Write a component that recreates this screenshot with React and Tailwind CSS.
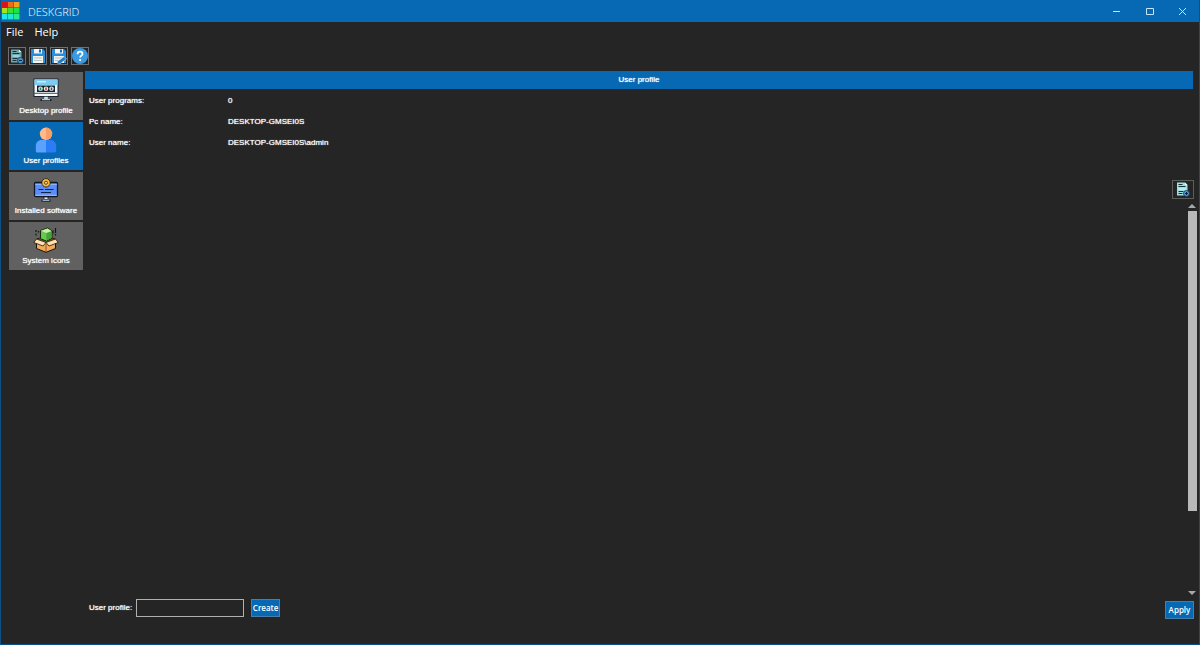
import { useState } from 'react';
import clsx from 'clsx';

const SANS = "font-['Liberation_Sans',sans-serif]";
const UI = "font-['Open_Sans','Noto_Sans',sans-serif]";
const SMALL = 'text-[8px] font-normal [text-shadow:0_0_1px_currentColor]';

const LOGO_CELLS = [
  '#d81418', '#f06a1c', '#f2a01c',
  '#a8e020', '#3fe02c', '#20e048',
  '#22e4ee', '#20e8d0', '#24ea98',
];

function Logo() {
  return (
    <svg viewBox="0 0 18 18" className="size-[18px]" aria-hidden="true">
      {LOGO_CELLS.map((fill, i) => (
        <rect key={i} x={(i % 3) * 6} y={Math.floor(i / 3) * 6} width="5.4" height="5.4" fill={fill} />
      ))}
    </svg>
  );
}

function DocumentIcon({ minus = false }) {
  return (
    <svg viewBox="0 0 14 15" className="h-[15px] w-[14px]" aria-hidden="true">
      <path d="M1 .5h8l2.500 2.500v10.500H1z" fill={minus ? '#6fa9b0' : '#9fe0e4'} />
      <path d="M9 .5V3h2.500z" fill="#e2fbfb" />
      <path d="M2.500 2.500h4M2.500 4.500h7M2.500 9.500h5M2.500 11.500h4" stroke="#14343c" strokeWidth="1" />
      <path d="M2.500 7h7" stroke="#d8f4f4" strokeWidth="1" />
      <circle cx="10.500" cy="11.500" r="3" fill="#4d97cf" stroke="#15334f" strokeWidth=".8" />
      <path d={minus ? 'M9 11.500h3' : 'M9 11.500h3M10.500 10v3'} stroke="#0d2440" strokeWidth="1" />
    </svg>
  );
}

function SaveIcon({ edit = false }) {
  return (
    <svg viewBox="0 0 16 16" className="size-[16px]" aria-hidden="true">
      <path d="M1 1h12l2 2v12H1z" fill="#2b8ed8" />
      <path d="M4 1h8v4.500H4z" fill="#eef4f8" />
      <path d="M9 1.500h2v3H9z" fill="#1f6fb0" />
      <path d="M3 8h10v7H3z" fill="#f4f4ee" />
      <path d="M4 10h8M4 12.500h8" stroke="#b9c2c6" strokeWidth="1" />
      {edit && <path d="M6.500 13.500L13 8.500l2.500 2.500L9.500 15.500l-3.500-.5z" fill="#1d7cc8" stroke="#dcecf8" strokeWidth=".6" />}
    </svg>
  );
}

function HelpIcon() {
  return (
    <svg viewBox="0 0 16 16" className="size-[16px]" aria-hidden="true">
      <circle cx="8" cy="8" r="8" fill="#3a9be2" />
      <path d="M5.500 6.200C5.500 4.600 6.600 3.700 8 3.700s2.500.9 2.500 2.200c0 1.700-2.400 1.900-2.400 3.700" fill="none" stroke="#fff" strokeWidth="1.700" />
      <circle cx="8.100" cy="12" r="1.100" fill="#fff" />
    </svg>
  );
}

function DesktopIcon() {
  return (
    <svg viewBox="0 0 26 24" className="h-6 w-[26px]" aria-hidden="true">
      <rect x="1" y="1" width="24" height="17.500" fill="#f4f8fa" stroke="#17232e" />
      <rect x="1.500" y="1.500" width="23" height="5.500" fill="#7ecbf0" />
      <path d="M4 3.800h9" stroke="#d9f3ff" strokeWidth="1.200" />
      <rect x="4" y="7.500" width="18" height="6.500" fill="#14222b" />
      <g fill="#e9f0f0">
        <circle cx="7.500" cy="10.700" r="2.300" />
        <circle cx="13" cy="10.700" r="2.300" />
        <circle cx="18.500" cy="10.700" r="2.300" />
      </g>
      <path d="M6.700 9.500h1.600v2.800H6.700z" fill="#2d7d78" />
      <path d="M12.200 9.500h1.600v2.800h-1.600z" fill="#c2452d" />
      <path d="M17.700 9.500h1.600v2.800h-1.600z" fill="#48555c" />
      <path d="M1.500 15.300h23" stroke="#17232e" strokeWidth=".8" />
      <path d="M11 18.500h4l.6 2.800H10.400z" fill="#d7e6ec" stroke="#17232e" strokeWidth=".6" />
      <path d="M7.500 22h11" stroke="#17232e" strokeWidth="2" />
      <path d="M9 21.700h8" stroke="#e6f1f5" strokeWidth="1" />
    </svg>
  );
}

function UserIcon() {
  return (
    <svg viewBox="0 0 22 26" className="h-[26px] w-[22px]" aria-hidden="true">
      <path d="M.8 24.500V19c0-3.600 2.400-6 5.700-6H11v12.500H1.800z" fill="#5aa2ff" />
      <path d="M21.200 24.500V19c0-3.600-2.400-6-5.700-6H11v12.500h9.200z" fill="#2b7df5" />
      <circle cx="11" cy="6.800" r="6.200" fill="#ffb98a" />
      <path d="M11 .6a6.200 6.200 0 0 1 0 12.400z" fill="#f79f68" />
    </svg>
  );
}

function SoftwareIcon() {
  return (
    <svg viewBox="0 0 26 24" className="h-6 w-[26px]" aria-hidden="true">
      <rect x="1.500" y="4.500" width="23" height="14" rx="1" fill="#5b8df6" stroke="#101728" strokeWidth="1.300" />
      <path d="M2.200 6.500h21.600" stroke="#8db3ff" strokeWidth="1" />
      <path d="M5.500 11.500h5M12 11.500h8.500M8 14.500h10" stroke="#12204a" strokeWidth="1.200" />
      <path d="M2.200 17.300h21.600" stroke="#a9c6f6" strokeWidth="1" />
      <path d="M11 19h4v2.500h-4z" fill="#dfe9f2" stroke="#101728" strokeWidth=".8" />
      <path d="M8.500 22.500h9" stroke="#101728" strokeWidth="2.200" />
      <path d="M9.500 22.200h7" stroke="#d8ecf8" strokeWidth="1" />
      <circle cx="13" cy="4.800" r="4.200" fill="#f6b73c" stroke="#1a1608" strokeWidth=".8" />
      <circle cx="13" cy="4.800" r="1.500" fill="#fbe08c" stroke="#3a2906" strokeWidth=".8" />
    </svg>
  );
}

function BoxIcon() {
  return (
    <svg viewBox="0 0 26 26" className="size-[26px]" aria-hidden="true">
      <path d="M3 3v2M3 6.500v2M5.500 4v1.500M22.500 1v5M22.500 7v1.500M20 3.500v3" stroke="#14170f" strokeWidth="1.200" />
      <path d="M3.500 12L13 9.500l9.500 2.500v9.500L13 25.300l-9.500-3.800z" fill="#f2aa5c" stroke="#20150c" strokeWidth="1" />
      <path d="M4 12.500l9 2.500 9-2.500-9-3z" fill="#7c4a21" />
      <path d="M7.500 3.500L14.500 1 19 3.800v7.400l-5.500 3-6-2.500z" fill="#66c850" stroke="#14260e" strokeWidth="1" />
      <path d="M8 3.700l6.400-2.200 4.200 2.500-5.200 2z" fill="#c9efa0" />
      <path d="M13.400 6.200l5.200-2v6.800l-5.200 2.600z" fill="#45a33a" />
      <path d="M3.500 12L13 15.500l-3 3.500L.8 15.500zM22.500 12L13 15.500l3 3.500 9.200-3.500z" fill="#ffe2ae" stroke="#20150c" strokeWidth=".8" />
      <path d="M13 16v9" stroke="#8e541f" strokeWidth="1" />
    </svg>
  );
}

const TOOLS = [
  { label: 'Remove profile', icon: <DocumentIcon minus /> },
  { label: 'Save', icon: <SaveIcon /> },
  { label: 'Save as', icon: <SaveIcon edit /> },
  { label: 'Help topics', icon: <HelpIcon /> },
];

const SECTIONS = [
  { label: 'Desktop profile', Icon: DesktopIcon },
  { label: 'User profiles', Icon: UserIcon },
  { label: 'Installed software', Icon: SoftwareIcon },
  { label: 'System icons', Icon: BoxIcon },
];

const DETAILS = [
  ['User programs:', '0'],
  ['Pc name:', 'DESKTOP-GMSEI0S'],
  ['User name:', 'DESKTOP-GMSEI0S\\admin'],
];

function TitleBar() {
  return (
    <header className={`flex h-[22px] items-center bg-[#0768b3] pl-px ${UI}`}>
      <Logo />
      <h1 className="ml-2 pt-px text-[11px] leading-4 font-light text-white">DESKGRID</h1>
      <div className="ml-auto flex text-[#c4e6fa]">
        <button type="button" aria-label="Minimize" className="flex h-5 w-[33px] items-center justify-center">
          <svg viewBox="0 0 9 9" className="size-[9px]"><path d="M1 4.500h7" stroke="currentColor" /></svg>
        </button>
        <button type="button" aria-label="Maximize" className="flex h-5 w-[33px] items-center justify-center">
          <svg viewBox="0 0 9 9" className="size-[9px]"><path d="M1.500 1.500h7v6h-7z" fill="none" stroke="currentColor" /></svg>
        </button>
        <button type="button" aria-label="Close" className="flex h-5 w-[33px] items-center justify-center">
          <svg viewBox="0 0 9 9" className="size-[9px]"><path d="M1 1l7 7M8 1L1 8" stroke="currentColor" /></svg>
        </button>
      </div>
    </header>
  );
}

function Sidebar({ active, onSelect }) {
  return (
    <nav className="flex w-[74px] shrink-0 flex-col gap-[2px] pt-px">
      {SECTIONS.map(({ label, Icon }) => (
        <button
          key={label}
          type="button"
          onClick={() => onSelect(label)}
          className={clsx(
            'flex h-12 flex-col items-center justify-between pt-1 pb-1 leading-[10px] whitespace-nowrap text-white',
            SMALL,
            active === label ? 'bg-[#0768b3]' : 'bg-[#616161]',
          )}
        >
          <span className="flex h-7 items-center"><Icon /></span>
          {label}
        </button>
      ))}
    </nav>
  );
}

function ScrollTrack() {
  return (
    <div className="mr-[2px] flex w-[10px] flex-1 flex-col items-center self-end">
      <button type="button" aria-label="Scroll up" className="h-2">
        <svg viewBox="0 0 10 8" className="h-2 w-[10px]"><path d="M1 5l4-4 4 4z" fill="#a8a8a8" /></svg>
      </button>
      <div className="w-[9px] grow-[300] bg-[#b9b9b9]" />
      <div className="grow-[78]" />
      <button type="button" aria-label="Scroll down" className="h-2">
        <svg viewBox="0 0 10 8" className="h-2 w-[10px]"><path d="M1 2l4 4 4-4z" fill="#a8a8a8" /></svg>
      </button>
    </div>
  );
}

export default function App() {
  const [active, setActive] = useState('User profiles');
  const [name, setName] = useState('');

  return (
    <div className={`flex min-h-screen flex-col border-x border-b border-[#0b528a] bg-[#252525] text-white ${SANS}`}>
      <TitleBar />

      {/* Menu */}
      <div className={`flex h-5 items-center gap-[11px] pl-[5px] text-[11px] leading-4 font-normal ${UI}`}>
        <button type="button">File</button>
        <button type="button">Help</button>
      </div>

      {/* Toolbar */}
      <div className="flex gap-[3px] pt-[5px] pl-[7px]">
        {TOOLS.map(({ label, icon }) => (
          <button
            key={label}
            type="button"
            aria-label={label}
            className="flex size-[18px] items-center justify-center border border-[#707070]"
          >
            {icon}
          </button>
        ))}
      </div>

      <div className="mt-[6px] flex flex-1 gap-[2px] pl-2">
        <Sidebar active={active} onSelect={setActive} />

        <main className="flex min-w-0 flex-1 flex-col">
          <h2 className={`mr-[6px] bg-[#0768b3] text-center leading-[18px] ${SMALL}`}>User profile</h2>

          <dl className={`pt-px pl-1 leading-[21px] ${SMALL}`}>
            {DETAILS.map(([term, value]) => (
              <div key={term} className="flex">
                <dt className="w-[139px]">{term}</dt>
                <dd>{value}</dd>
              </div>
            ))}
          </dl>

          <button
            type="button"
            aria-label="Add profile"
            className="mt-[27px] mr-[5px] mb-1 flex h-[19px] w-[22px] items-center justify-center self-end border border-[#5c5c58]"
          >
            <DocumentIcon />
          </button>

          <ScrollTrack />

          {/* Create / apply */}
          <form
            className="mt-[2px] mr-[5px] mb-[25px] flex items-start pl-1"
            onSubmit={(e) => e.preventDefault()}
          >
            <label htmlFor="profile-name" className={`leading-[18px] ${SMALL}`}>User profile:</label>
            <input
              id="profile-name"
              value={name}
              onChange={(e) => setName(e.target.value)}
              className="ml-1 h-[18px] w-[108px] border border-[#b0b0b0] bg-transparent px-1 text-[8px] outline-none"
            />
            <button
              type="submit"
              className={`ml-[7px] flex h-[18px] w-[29px] items-center justify-center border border-[#4a7ca5] bg-[#0768b3] text-[8px] leading-4 font-semibold ${UI}`}
            >
              Create
            </button>
            <button
              type="button"
              className={`mt-[2px] ml-auto flex h-[18px] w-[29px] items-center justify-center border border-[#4a7ca5] bg-[#0768b3] text-[8px] leading-4 font-semibold ${UI}`}
            >
              Apply
            </button>
          </form>
        </main>
      </div>
    </div>
  );
}
